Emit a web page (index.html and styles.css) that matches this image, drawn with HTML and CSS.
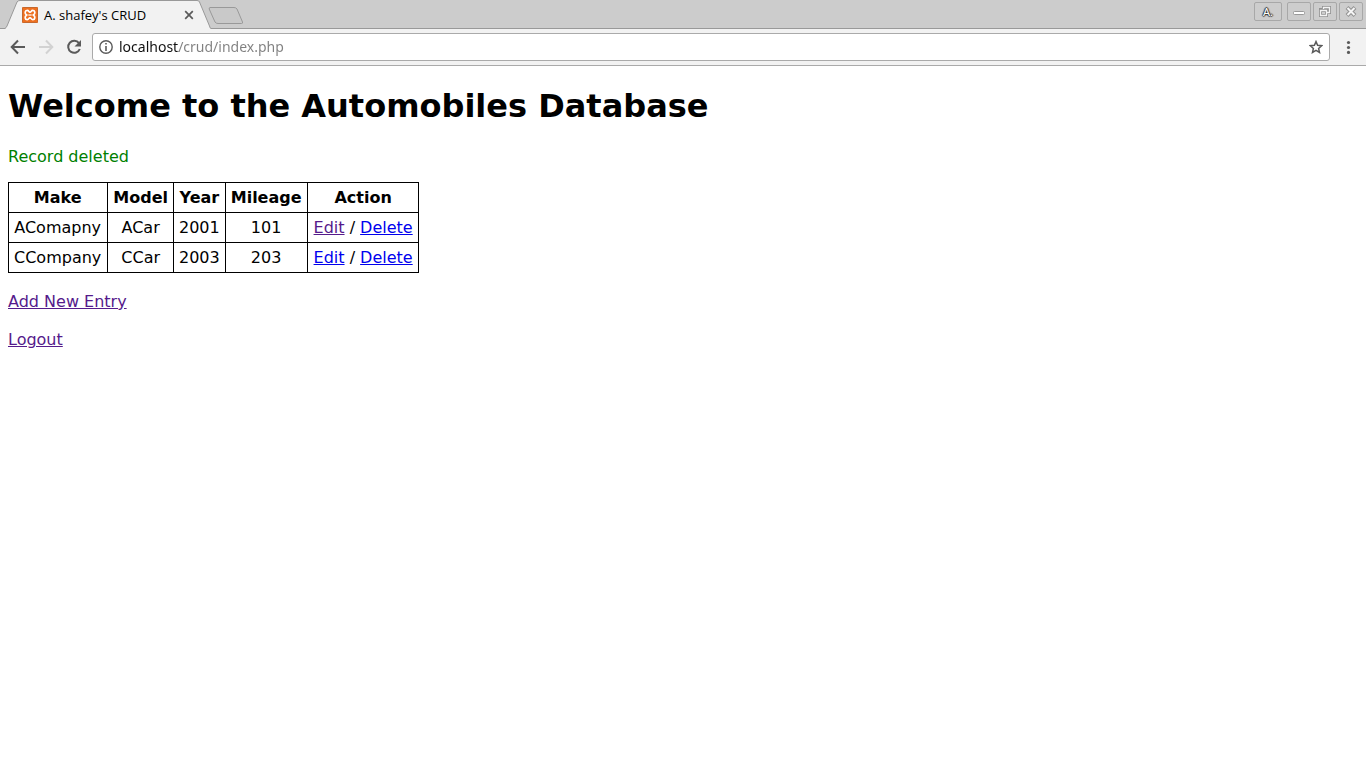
FILE: index.html
```html
<!DOCTYPE html>
<html lang="en">
<head>
<meta charset="utf-8">
<title>A. shafey's CRUD</title>
<link rel="stylesheet" href="styles.css">
</head>
<body>
<header class="browser">
  <div class="tab-strip">
    <div class="tab">
      <svg class="tab-edge" width="15" height="29" viewBox="0 0 15 29" aria-hidden="true"><path d="M0 29 L0 28.500 Q1 28 2 26 L12 2 Q13 .5 15 .5 V29z" fill="#f2f2f2"/><path d="M0 28.500 Q1 28 2 26 L12 2 Q13 .5 15 .5" fill="none" stroke="#999"/></svg>
      <div class="tab-body">
        <svg width="16" height="16" viewBox="0 0 16 16" aria-hidden="true"><rect width="16" height="16" rx="1" fill="#ee7020"/><rect x=".5" y=".5" width="15" height="15" rx="1" fill="none" stroke="#c4682f"/><path d="M4.600 8 C2.400 6.500 2.800 3.300 5.200 3.300 C7 3.300 6.600 5.200 8 5.200 C9.400 5.200 9 3.300 10.800 3.300 C13.200 3.300 13.600 6.500 11.400 8 C13.600 9.500 13.200 12.700 10.800 12.700 C9 12.700 9.400 10.800 8 10.800 C6.600 10.800 7 12.700 5.200 12.700 C2.800 12.700 2.400 9.500 4.600 8z" fill="#ee7020" stroke="#fff" stroke-width="1.700"/><path d="M6.300 8h3.400" stroke="#fff" stroke-width="1.200"/></svg>
        <span class="tab-title">A. shafey's CRUD</span>
        <button class="icon-button" type="button" aria-label="Close tab"><svg width="10" height="10" viewBox="0 0 10 10"><path d="M1.200 1.200l7.600 7.600M8.800 1.200L1.200 8.800" stroke="#5a5a5a" stroke-width="1.700"/></svg></button>
      </div>
      <svg class="tab-edge" width="14" height="29" viewBox="0 0 14 29" aria-hidden="true"><path d="M0 .5 Q2 .5 2.500 2 L12.500 26 Q13 28.500 14 28.500 V29 H0z" fill="#f2f2f2"/><path d="M0 .5 Q2 .5 2.500 2 L12.500 26 Q13 28.500 14 28.500" fill="none" stroke="#999"/></svg>
    </div>
    <button class="icon-button new-tab" type="button" aria-label="New tab"><svg width="36" height="18" viewBox="0 0 36 18"><path d="M2 .5 H26 Q28 .5 29 2 L34.500 15 Q35 16.500 33.500 16.500 H10 Q8 16.500 7 15 L1.200 2 Q1 .5 2 .5z" fill="#c9c9c9" stroke="#999"/></svg></button>
    <div class="window-controls">
      <button class="window-button profile" type="button">A.</button>
      <button class="window-button" type="button" aria-label="Minimize"><svg width="22" height="17" viewBox="0 0 22 17"><rect x="5.500" y="8.500" width="11" height="3" rx="1" fill="#fff" stroke="#999"/></svg></button>
      <button class="window-button" type="button" aria-label="Restore"><svg width="22" height="17" viewBox="0 0 22 17" fill="none"><path d="M9.500 9 V4.500 H15.500 V9.500 H12.500 M6.500 6.500 H12.500 V12.500 H6.500z" stroke="#929292" stroke-width="3"/><path d="M9.500 6 V4.500 H15.500 V9.500 H13 M6.500 7.500 H12.500 V12.500 H6.500z" stroke="#f3f3f3" stroke-width="1.300"/></svg></button>
      <button class="window-button" type="button" aria-label="Close"><svg width="22" height="17" viewBox="0 0 22 17"><path d="M7 4.500l8 8M15 4.500l-8 8" stroke="#929292" stroke-width="4"/><path d="M7.500 5l7 7M14.500 5l-7 7" stroke="#f5f5f5" stroke-width="2"/></svg></button>
    </div>
  </div>
  <div class="toolbar">
    <nav class="history" aria-label="History">
      <button class="icon-button" type="button" aria-label="Back"><svg width="16" height="16" viewBox="0 0 16 16"><path d="M15 8H2.500M8 1.500L1.700 8L8 14.500" fill="none" stroke="#5a5a5a" stroke-width="2"/></svg></button>
      <button class="icon-button" type="button" aria-label="Forward" disabled><svg width="16" height="16" viewBox="0 0 16 16"><path d="M1 8h12.500M8 1.500L14.300 8L8 14.500" fill="none" stroke="#d2d2d2" stroke-width="2"/></svg></button>
      <button class="icon-button" type="button" aria-label="Reload"><svg width="16" height="16" viewBox="0 0 16 16"><path d="M13 4.200A6 6 0 1 0 13.800 10" fill="none" stroke="#5a5a5a" stroke-width="2"/><path d="M15 1v6.500H8.500z" fill="#5a5a5a"/></svg></button>
    </nav>
    <div class="address">
      <button class="icon-button" type="button" aria-label="Site information"><svg width="14" height="14" viewBox="0 0 14 14"><circle cx="7" cy="7" r="6.200" fill="none" stroke="#5a5a5a" stroke-width="1.400"/><path d="M6.200 3h1.600v1.600H6.200zM6.200 6h1.600v5H6.200z" fill="#5a5a5a"/></svg></button>
      <input class="url" type="text" aria-label="Address" value="localhost/crud/index.php">
      <button class="icon-button" type="button" aria-label="Bookmark this page"><svg width="14" height="14" viewBox="0 0 14 14"><path d="M7 1.600l1.600 3.700 4 .4-3 2.700.9 4L7 10.300l-3.500 2.100.9-4-3-2.700 4-.4z" fill="none" stroke="#5a5a5a" stroke-width="1.500"/></svg></button>
    </div>
    <button class="icon-button" type="button" aria-label="Menu"><svg width="14" height="14" viewBox="0 0 14 14" fill="#5a5a5a"><circle cx="7.500" cy="2.500" r="1.600"/><circle cx="7.500" cy="7.500" r="1.600"/><circle cx="7.500" cy="12.400" r="1.600"/></svg></button>
  </div>
</header>
<main class="page">
  <h1 class="heading">Welcome to the Automobiles Database</h1>
  <p class="message">Record deleted</p>
  <table class="records">
    <thead>
      <tr><th scope="col">Make</th><th scope="col">Model</th><th scope="col">Year</th><th scope="col">Mileage</th><th scope="col">Action</th></tr>
    </thead>
    <tbody>
      <tr><td>AComapny</td><td>ACar</td><td>2001</td><td>101</td><td><a class="link seen" href="#edit-1">Edit</a> / <a class="link" href="#delete-1">Delete</a></td></tr>
      <tr><td>CCompany</td><td>CCar</td><td>2003</td><td>203</td><td><a class="link" href="#edit-2">Edit</a> / <a class="link" href="#delete-2">Delete</a></td></tr>
    </tbody>
  </table>
  <p class="page-link"><a class="link seen" href="#add">Add New Entry</a></p>
  <p class="page-link"><a class="link seen" href="#logout">Logout</a></p>
</main>
</body>
</html>
```
FILE: styles.css
```css
* { box-sizing: border-box; }
body { margin: 0; background: #fff; color: #000; font: 16px/19px "DejaVu Sans", sans-serif; }
svg { display: block; }

.browser { font-family: "Noto Sans", sans-serif; }
.tab-strip { display: flex; align-items: flex-start; height: 29px; padding-left: 5px; background: #ccc; box-shadow: inset 0 -1px #999; }
.tab { display: flex; height: 29px; }
.tab-edge { flex: none; }
.tab-body { display: flex; align-items: center; width: 177px; padding: 0 3px 0 2px; border-top: 1px solid #999; background: #f2f2f2; }
.tab-title { flex: 1; margin-left: 6px; font: 13px/18px "Open Sans", sans-serif; white-space: nowrap; }
.icon-button { display: block; flex: none; padding: 0; border: 0; background: none; }
.new-tab { margin: 7px 0 0 -3px; }
.window-controls { display: flex; gap: 2px; margin-left: auto; padding: 2px 3px 0 0; }
.window-button { display: flex; align-items: center; justify-content: center; width: 24px; height: 19px; padding: 0; border: 1px solid #a8a8a8; border-radius: 2px; background: #cdcdcd; }
.profile { width: 28px; margin-right: 3px; color: #fff; font: 11px/17px "Noto Sans", sans-serif; text-shadow: 1px 0 1px #333, -1px 0 1px #333, 0 1px 1px #333, 0 -1px 1px #333; }

.toolbar { display: flex; align-items: center; height: 37px; padding: 0 11px 0 10px; border-bottom: 1px solid #aaa; background: #f2f2f2; }
.history { display: flex; gap: 12px; margin-right: 10px; }
.address { display: flex; flex: 1; align-items: center; gap: 6px; height: 28px; margin-right: 11px; padding: 0 6px; border: 1px solid #aaa; border-radius: 3px; background: #fff; }
.url { flex: 1; min-width: 0; height: 20px; padding: 0; border: 0; outline: 0; color: transparent; background: linear-gradient(90deg, #111 60px, #808080 60px) text; font: 14px/20px "Noto Sans", sans-serif; }

.page { padding: 21px 8px; }
.heading { margin: 0 0 22px; font-size: 32px; line-height: 38px; }
.message { margin: 0 0 16px; color: #008000; }
.records { border-collapse: collapse; text-align: center; }
.records th, .records td { padding: 5px; border: 1px solid #000; }
.records th:first-child, .records td:first-child { padding-right: 6px; }
.records th:last-child, .records td:last-child { padding-left: 6px; }
.page-link { margin: 19px 0; }
.link { color: #00e; }
.seen { color: #551a8b; }
```
